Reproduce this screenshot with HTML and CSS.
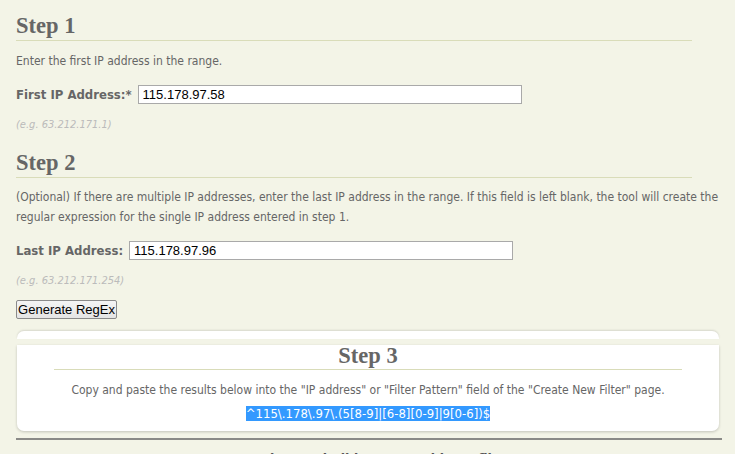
FILE: index.html
```html
<!DOCTYPE html>
<html>
<head>
<meta charset="utf-8">
<link rel="stylesheet" href="styles.css">
</head>
<body>
<div class="page">
  <h2 class="step">Step 1</h2>
  <p class="text">Enter the first IP address in the range.</p>
  <div class="field">
    <label class="label">First IP Address:*</label>
    <input class="ip" type="text" value="115.178.97.58">
  </div>
  <p class="hint">(e.g. 63.212.171.1)</p>

  <h2 class="step step2">Step 2</h2>
  <p class="text">(Optional) If there are multiple IP addresses, enter the last IP address in the range. If this field is left blank, the tool will create the regular expression for the single IP address entered in step 1.</p>
  <div class="field">
    <label class="label">Last IP Address:</label>
    <input class="ip" type="text" value="115.178.97.96">
  </div>
  <p class="hint">(e.g. 63.212.171.254)</p>
  <button class="btn" type="button">Generate RegEx</button>

  <div class="result">
    <div class="result-cap"></div>
    <div class="result-body">
      <h2 class="step3">Step 3</h2>
      <p class="text center">Copy and paste the results below into the "IP address" or "Filter Pattern" field of the "Create New Filter" page.</p>
      <p class="regex-line"><span class="regex">^115\.178\.97\.(5[8-9]|[6-8][0-9]|9[0-6])$</span></p>
    </div>
  </div>
  <hr class="rule">
  <h3 class="next">Learn how to build your IP address filter</h3>
</div>
</body>
</html>
```

FILE: styles.css
```css
html, body {
  margin: 0;
  padding: 0;
  background: #f3f4e7;
  overflow: hidden;
}
.page {
  padding: 0 13px 0 16px;
  font-family: "DejaVu Sans Condensed", "DejaVu Sans", sans-serif;
  font-stretch: condensed;
  font-size: 12px;
  color: #666;
}
.step {
  margin: 12px 30px 0 0;
  height: 28px;
  border-bottom: 1px solid #d9dcb9;
  font-family: "Liberation Serif", serif;
  font-stretch: normal;
  font-weight: bold;
  font-size: 22.5px;
  line-height: 28px;
  color: #666;
  box-sizing: content-box;
}
.step2 {
  margin-top: 14px;
}
.text {
  margin: 10px 0 0 0;
  line-height: 20px;
}
.step2 + .text {
  margin-top: 9px;
}
.field {
  display: flex;
  align-items: center;
  gap: 6px;
  margin-top: 14px;
  height: 19px;
}
.label {
  font-weight: bold;
  font-size: 13px;
}
.ip {
  width: 384px;
  height: 19px;
  box-sizing: border-box;
  border: 1px solid #a9a9a9;
  background: #fff;
  padding: 0 4px;
  margin: 0;
  font-family: "Liberation Sans", sans-serif;
  font-size: 13px;
  color: #000;
  outline: none;
}
.hint {
  margin: 11px 0 0 0;
  line-height: 20px;
  font-style: italic;
  font-size: 11px;
  color: #bbb;
}
.btn {
  display: block;
  margin-top: 9px;
  width: 101px;
  height: 19px;
  padding: 0;
  border: 1px solid #8a8a8a;
  border-radius: 2px;
  background: linear-gradient(#f4f4f4, #e4e4e4);
  font-family: "Liberation Sans", sans-serif;
  font-size: 13px;
  color: #000;
}
.result {
  margin: 12px 3px 0 1px;
}
.result-cap {
  height: 8px;
  background: #fff;
  border-radius: 7px 7px 0 0;
  box-shadow: 0 -1px 2px rgba(0,0,0,0.12);
}
.result-body {
  margin-top: 6px;
  background: #fff;
  border-radius: 0 0 7px 7px;
  box-shadow: 0 1px 3px rgba(0,0,0,0.2);
  padding: 0 37px 10px;
  text-align: center;
}
.step3 {
  margin: 0;
  height: 24px;
  border-bottom: 1px solid #d9dcb9;
  font-family: "Liberation Serif", serif;
  font-stretch: normal;
  font-weight: bold;
  font-size: 22.5px;
  line-height: 22px;
  color: #666;
}
.center {
  margin-top: 10px;
}
.regex-line {
  margin: 7px 0 0 0;
  line-height: 14px;
}
.regex {
  background: #3399ff;
  color: #fff;
  font-size: 13px;
}
.rule {
  margin: 7px 0 0 0;
  border: 0;
  border-top: 2px solid #8a8a87;
}
.next {
  margin: 11px 0 0 0;
  text-align: center;
  font-size: 14px;
  color: #555;
}
```
